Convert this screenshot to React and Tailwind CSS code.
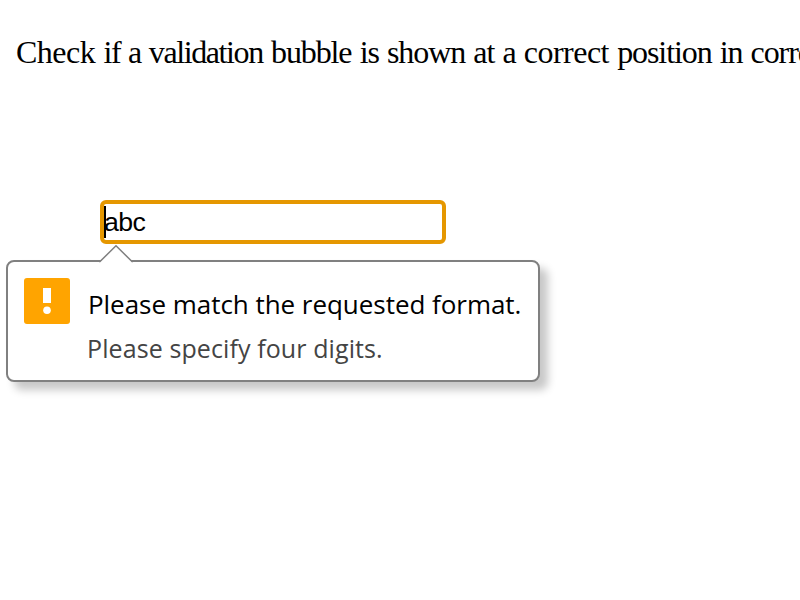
function ValidationBubble() {
  return (
    <div className="relative mt-4 ml-1.5 flex h-[122px] w-[534px] rounded-[8px] border-2 border-[#808080] bg-white pt-4 pl-4 font-['Open_Sans',sans-serif] shadow-[8px_8px_8px_rgba(0,0,0,0.22)]">
      <svg className="absolute -top-[18px] left-[90px]" width="36" height="20" viewBox="0 0 36 20" fill="none">
        <path d="M2 18L18 2L34 18V20H2Z" fill="#fff" />
        <path d="M1 17.5H2L18 1.8L34 17.5H35" stroke="#808080" strokeWidth="1.5" />
      </svg>
      <svg className="shrink-0" width="46" height="46" viewBox="0 0 46 46">
        <rect width="46" height="46" rx="3" fill="#ffa400" />
        <path d="M19 10H27V25H19Z" fill="#fff" />
        <circle cx="23" cy="32.3" r="3.8" fill="#fff" />
      </svg>
      <div className="ml-[17px] whitespace-nowrap">
        <p className="mt-2 ml-px w-max text-[26px] leading-[36px] tracking-[-0.04px] text-black">Please match the requested format.</p>
        <p className="mt-[9px] w-max text-[25px] leading-[34px] tracking-[0.1px] text-[#444]">Please specify four digits.</p>
      </div>
    </div>
  );
}

export default function App() {
  return (
    <main className="h-[600px] w-[800px] overflow-hidden bg-white text-black">
      <p className="h-[200px] pt-8 pl-4 font-['Liberation_Serif',serif] text-[32px] leading-10 tracking-[-1.1px] whitespace-nowrap [word-spacing:1.3px]">
        <span className="tracking-[-0.5px]">Check</span> <span className="tracking-[-1.4px]">if a validation</span> bubble is shown at a <span className="tracking-[-0.5px]">correct</span> position in corr<span>ect size.</span>
      </p>
      <div className="relative ml-[100px] flex h-11 w-[346px] items-center rounded-[6px] border-4 border-[#e59700] bg-white font-['Liberation_Sans',sans-serif] text-[26.67px] leading-8 tracking-[-0.6px]">
        <span className="absolute top-0.5 left-0 h-8 w-0.5 bg-black" />
        <span>abc</span>
      </div>
      <ValidationBubble />
    </main>
  );
}
